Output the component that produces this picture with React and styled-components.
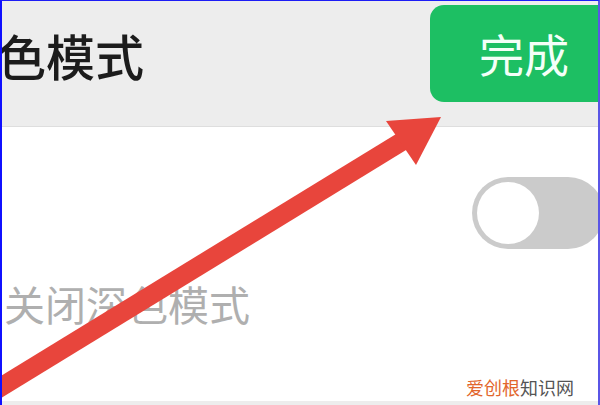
import React from "react";
import styled, { createGlobalStyle } from "styled-components";

const Global = createGlobalStyle`
  html, body { margin: 0; padding: 0; background: #fff; }
  body { font-family: "Noto Sans CJK SC", "Noto Sans", sans-serif; }
  * { box-sizing: border-box; }
`;

const Frame = styled.div`
  position: relative;
  width: 600px;
  height: 405px;
  overflow: hidden;
  display: flex;
  flex-direction: column;
  background: #fff;
  border-top: 1px solid #1d1df5;
  border-left: 2px solid #1010ff;
  border-right: 2px solid #5a55e6;
`;

const Header = styled.header`
  flex: 0 0 126px;
  background: #ededed;
  border-bottom: 1px solid #dedede;
  padding-top: 4px;
`;

const Bar = styled.div`
  height: 97px;
  display: flex;
  align-items: center;
  justify-content: space-between;
`;

/* the screen title runs past the left edge of the view */
const Title = styled.h1`
  margin: 2px 0 0 -54px;
  font-size: 49px;
  line-height: 1;
  font-weight: 500;
  color: #1c1c1c;
`;

const DoneButton = styled.button`
  height: 97px;
  width: 182px;
  margin-right: -14px;
  border: none;
  border-radius: 14px;
  background: #1dbf63;
  color: #f4fff8;
  font-family: inherit;
  font-size: 45px;
  font-weight: 400;
  line-height: 1;
  display: flex;
  align-items: center;
  justify-content: center;
  padding: 0 0 0 6px;
`;

const Body = styled.main`
  flex: 1;
  display: flex;
  flex-direction: column;
  padding-top: 50px;
`;

const SwitchRow = styled.div`
  display: flex;
  justify-content: flex-end;
  margin-right: -6px;
`;

const Track = styled.div`
  width: 132px;
  height: 72px;
  border-radius: 36px;
  background: ${(p) => (p.$on ? "#1dbf63" : "#cbcbcb")};
  padding: 5px;
  display: flex;
  justify-content: ${(p) => (p.$on ? "flex-end" : "flex-start")};
`;

const Knob = styled.div`
  width: 62px;
  height: 62px;
  border-radius: 50%;
  background: #fff;
`;

const Label = styled.div`
  margin-top: 34px;
  padding-left: 2px;
  font-size: 41px;
  line-height: 1;
  color: #afafaf;
`;

const Spacer = styled.div`
  flex: 1;
`;

const Mark = styled.div`
  display: flex;
  justify-content: flex-end;
  padding: 0 24px 5px 0;
  font-size: 18px;
  line-height: 1;
`;

const MarkPart = styled.span`
  color: ${(p) => p.$tone};
`;

const Footer = styled.div`
  flex: 0 0 4px;
  background: #ededed;
`;

const Overlay = styled.svg`
  position: absolute;
  left: -2px;
  top: -1px;
  width: 600px;
  height: 405px;
  pointer-events: none;
`;

function Pointer() {
  return (
    <Overlay viewBox="0 0 600 405">
      <line
        x1="-12"
        y1="395"
        x2="406"
        y2="139"
        stroke="#e8453c"
        strokeWidth="19"
      />
      <polygon points="441,117 386,121 416,165" fill="#e8453c" />
    </Overlay>
  );
}

export default function App() {
  return (
    <>
      <Global />
      <Frame>
        <Header>
          <Bar>
            <Title>深色模式</Title>
            <DoneButton>完成</DoneButton>
          </Bar>
        </Header>
        <Body>
          <SwitchRow>
            <Track $on={false}>
              <Knob />
            </Track>
          </SwitchRow>
          <Label>关闭深色模式</Label>
          <Spacer />
          <Mark>
            <MarkPart $tone="#e2662c">爱创根</MarkPart>
            <MarkPart $tone="#555">知识网</MarkPart>
          </Mark>
        </Body>
        <Footer />
        <Pointer />
      </Frame>
    </>
  );
}
